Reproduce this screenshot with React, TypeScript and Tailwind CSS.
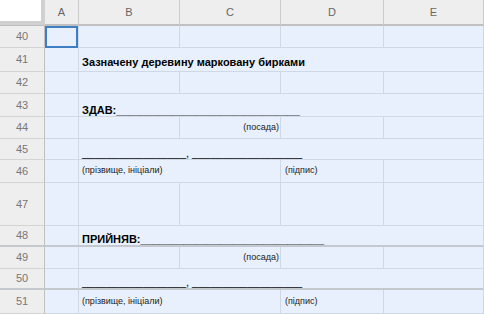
import React from "react";

const ROWS = [
  { n: 40, h: 22 },
  { n: 41, h: 24 },
  { n: 42, h: 22 },
  { n: 43, h: 23 },
  { n: 44, h: 22 },
  { n: 45, h: 21 },
  { n: 46, h: 23 },
  { n: 47, h: 43 },
  { n: 48, h: 21 },
  { n: 49, h: 22 },
  { n: 50, h: 21 },
  { n: 51, h: 24 },
];

const thick = new Set([48, 50]);

const cellBase = "bg-[#e7f0fc] border-r border-b border-[#cfd9e6] overflow-visible whitespace-nowrap";

function Cell({
  span = 1,
  row,
  className = "",
  children,
}: {
  span?: number;
  row: number;
  className?: string;
  children?: React.ReactNode;
}) {
  const spanCls =
    span === 4 ? "col-span-4" : span === 2 ? "col-span-2" : span === 3 ? "col-span-3" : "";
  const b = thick.has(row) ? "border-b-2 border-b-[#c4c9cf]" : "";
  return <div className={`${cellBase} ${spanCls} ${b} ${className}`}>{children}</div>;
}

export default function App() {
  const signRow = (row: number) => (
    <Cell row={row} span={4} className="flex items-end pl-[3px] pb-0 text-[11px] leading-[12px] text-black">
      _________________, __________________
    </Cell>
  );
  const nameRow = (row: number) => (
    <>
      <Cell row={row} span={2} className="flex items-center pl-[3px] text-[9px] text-[#222]">
        (прізвище, ініціали)
      </Cell>
      <Cell row={row} className="flex items-center pl-[4px] text-[9px] text-[#222]">
        (підпис)
      </Cell>
      <Cell row={row} />
    </>
  );
  const posRow = (row: number) => (
    <>
      <Cell row={row} />
      <Cell row={row} className="flex items-center justify-end pr-[1px] text-[9px] text-[#222]">
        (посада)
      </Cell>
      <Cell row={row} />
      <Cell row={row} />
    </>
  );
  const blankRow = (row: number) => (
    <>
      <Cell row={row} />
      <Cell row={row} />
      <Cell row={row} />
      <Cell row={row} />
    </>
  );

  const content: Record<number, React.ReactNode> = {
    40: blankRow(40),
    41: (
      <Cell row={41} span={4} className="flex items-end pl-[3px] pb-[2px] text-[11px] leading-[13px] font-bold text-black">
        Зазначену деревину марковану бирками
      </Cell>
    ),
    42: blankRow(42),
    43: (
      <Cell row={43} span={4} className="flex items-end pl-[3px] pb-0 text-[11px] leading-[11px] font-bold text-black">
        ЗДАВ:______________________________
      </Cell>
    ),
    44: posRow(44),
    45: signRow(45),
    46: nameRow(46),
    47: blankRow(47),
    48: (
      <Cell row={48} span={4} className="flex items-end pl-[3px] pb-0 text-[11px] leading-[11px] font-bold text-black">
        ПРИЙНЯВ:______________________________
      </Cell>
    ),
    49: posRow(49),
    50: signRow(50),
    51: nameRow(51),
  };

  return (
    <div
      className="w-[484px] h-[314px] overflow-hidden bg-white"
      style={{ fontFamily: '"Liberation Sans", Arial, sans-serif' }}
    >
      <div
        className="grid"
        style={{
          gridTemplateColumns: "45px 34px 101px 101px 103px 100px",
          gridTemplateRows: `26px ${ROWS.map((r) => r.h + "px").join(" ")}`,
        }}
      >
        {/* corner */}
        <div className="bg-[#d0d0d0] border-b border-[#bdbdbd] pr-[4px] pb-[4px]">
          <div className="w-full h-full bg-white" />
        </div>
        {["A", "B", "C", "D", "E"].map((c) => (
          <div
            key={c}
            className="bg-[#eeeeee] border-r border-[#cccccc] border-b-2 border-b-[#c0c0c0] flex items-center justify-center text-[11px] text-[#666]"
          >
            {c}
          </div>
        ))}
        {ROWS.map((r) => (
          <React.Fragment key={r.n}>
            <div
              className={`bg-[#eeeeee] border-r border-[#c0c0c0] flex items-center justify-center text-[11px] text-[#777] ${
                thick.has(r.n) ? "border-b-2 border-b-[#c4c9cf]" : "border-b border-b-[#d4d4d4]"
              }`}
            >
              {r.n}
            </div>
            {r.n === 40 ? (
              <div className={`${cellBase} relative`}>
                <div className="absolute left-0 top-[0px] right-0 bottom-[-1px] border-2 border-[#3f7ec3]" />
              </div>
            ) : (
              <Cell row={r.n} />
            )}
            {content[r.n]}
          </React.Fragment>
        ))}
      </div>
    </div>
  );
}
